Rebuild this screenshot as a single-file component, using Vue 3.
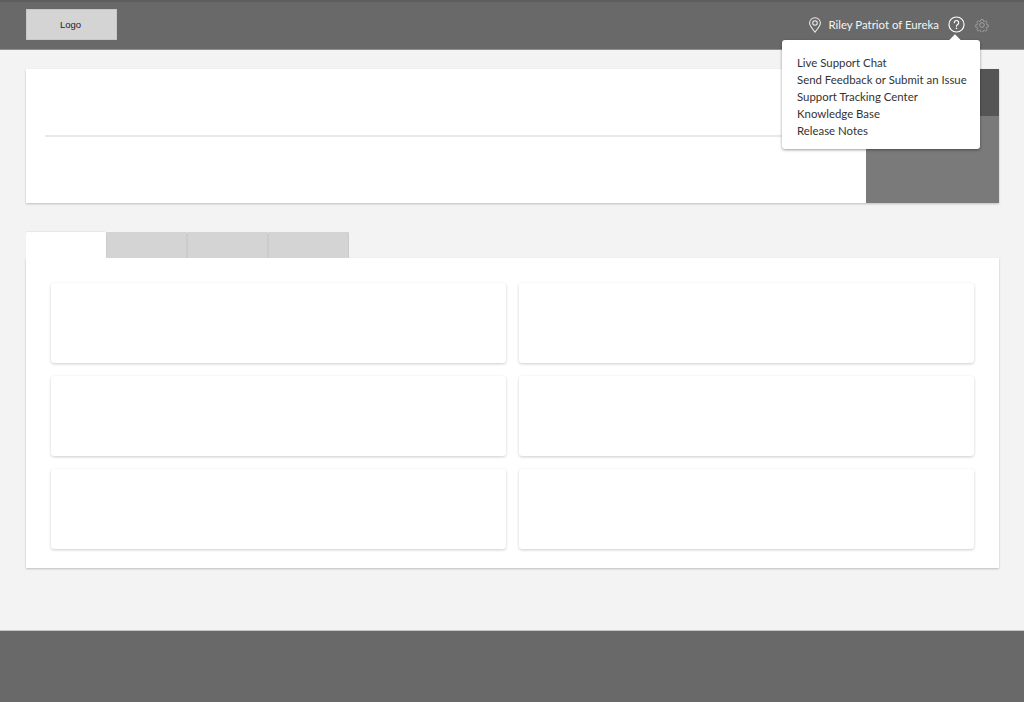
<script setup>
const links = ['Live Support Chat', 'Send Feedback or Submit an Issue', 'Support Tracking Center', 'Knowledge Base', 'Release Notes']
const tabs = [0, 1, 2, 3]
const cards = [0, 1, 2, 3, 4, 5]
</script>

<template>
  <div class="page">
    <header class="topbar">
      <div class="logo">Logo</div>
      <div class="user">
        <svg class="pin" width="14" height="16" viewBox="0 0 16 19" fill="none" stroke="#f2f2f2" stroke-width="1.2">
          <path d="M8 18C5 14 1.600 10.800 1.600 7.200a6.400 6.400 0 0 1 12.800 0C14.400 10.800 11 14 8 18Z" />
          <circle cx="8" cy="7.200" r="2.700" />
        </svg>
        <span class="name">Riley Patriot of Eureka</span>
        <svg class="help" width="17" height="17" viewBox="0 0 18 18" fill="none" stroke="#fff" stroke-width="1.200">
          <circle cx="9" cy="9" r="8" />
          <path d="M6.700 7.100a2.300 2.300 0 1 1 3.500 2c-.8.500-1.200.9-1.200 1.800" stroke-linecap="round" />
          <circle cx="9" cy="13.100" r=".8" fill="#fff" stroke="none" />
        </svg>
        <svg class="gear" width="14" height="14" viewBox="0 0 24 24" fill="none" stroke="#a9a9a9" stroke-width="1.500">
          <path d="M10 1.500h4l.6 3.200 1.900.8 2.700-1.800 2.800 2.800-1.800 2.700.8 1.900 3 .6v4l-3 .6-.8 1.900 1.800 2.700-2.800 2.800-2.700-1.800-1.900.8-.6 3.200h-4l-.6-3.200-1.900-.8-2.700 1.800-2.800-2.800 1.800-2.700-.8-1.900-3-.6v-4l3-.6.8-1.900-1.800-2.700 2.800-2.800 2.700 1.800 1.900-.8Z" transform="translate(12 12) scale(.9) translate(-12 -12)" />
          <circle cx="12" cy="12" r="4" />
        </svg>
      </div>
      <div class="popover">
        <span class="caret"></span>
        <a v-for="link in links" :key="link" class="pop-link">{{ link }}</a>
      </div>
    </header>

    <main class="main">
      <section class="hero">
        <div class="hero-body">
          <div class="hero-line"></div>
        </div>
        <aside class="hero-side">
          <div class="side-top"></div>
          <div class="side-bottom"></div>
        </aside>
      </section>

      <section class="tabbed">
        <div class="tabs">
          <div v-for="t in tabs" :key="t" class="tab" :class="{ active: t === 0 }"></div>
        </div>
        <div class="panel">
          <div v-for="c in cards" :key="c" class="card"></div>
        </div>
      </section>
    </main>

    <footer class="footer"></footer>
  </div>
</template>

<style scoped>
.page {
  width: 1024px;
  height: 702px;
  display: flex;
  flex-direction: column;
  background: #f3f3f3;
  overflow: hidden;
  font-family: Lato, "Noto Sans", sans-serif;
}
.topbar {
  position: relative;
  flex: 0 0 50px;
  box-sizing: border-box;
  height: 50px;
  display: flex;
  align-items: center;
  justify-content: space-between;
  padding: 0 35px 0 26px;
  background: #696969;
  border-top: 2px solid #5d5d5d;
  border-bottom: 1px solid #8f8f8f;
}
.logo {
  width: 91px;
  height: 31px;
  margin-top: -3px;
  display: flex;
  align-items: center;
  justify-content: center;
  padding-right: 2px;
  box-sizing: border-box;
  background: #d4d4d4;
  box-shadow: inset 0 0 0 1px #c8c8c8;
  color: #222;
  font-family: "Liberation Sans", sans-serif;
  font-size: 9.5px;
}
.user {
  display: flex;
  align-items: center;
  margin-top: -2px;
}
.pin { margin-right: 6px; }
.name {
  color: #f4f4f4;
  font-size: 11.400px;
  white-space: nowrap;
  margin-right: 9px;
}
.help { margin-right: 10px; }
.popover {
  position: absolute;
  z-index: 2;
  left: 782px;
  top: 38px;
  width: 198px;
  height: 109px;
  box-sizing: border-box;
  padding: 14px 0 0 15px;
  display: flex;
  flex-direction: column;
  background: #fff;
  border-radius: 3px;
  box-shadow: 0 1px 3px rgba(0, 0, 0, .4);
}
.caret {
  position: absolute;
  left: 169px;
  top: -4px;
  width: 8px;
  height: 8px;
  background: #fff;
  transform: rotate(45deg);
}
.pop-link {
  position: relative;
  color: #333;
  font-size: 11.400px;
  line-height: 17px;
  white-space: nowrap;
}
.main {
  flex: 1;
  display: flex;
  flex-direction: column;
  padding: 19px 25px 0 26px;
}
.hero {
  height: 134px;
  display: flex;
  background: #fff;
  box-shadow: 0 1px 2px rgba(0, 0, 0, .22);
}
.hero-body {
  flex: 1;
  padding: 66px 0 0 19px;
}
.hero-line {
  height: 2px;
  background: #e8e8e8;
}
.hero-side {
  flex: 0 0 133px;
  display: flex;
  flex-direction: column;
}
.side-top {
  flex: 0 0 47px;
  background: #555;
}
.side-bottom {
  flex: 1;
  background: #7a7a7a;
}
.tabbed {
  margin-top: 29px;
}
.tabs {
  display: flex;
  height: 26px;
}
.tab {
  width: 81px;
  background: #d4d4d4;
  border-radius: 2px 2px 0 0;
  box-shadow: inset -1px 0 0 #cacaca, inset 1px 0 0 #cdcdcd;
}
.tab.active {
  width: 80px;
  background: #fff;
  box-shadow: 0 -1px 1px rgba(0, 0, 0, .05);
}
.panel {
  height: 310px;
  box-sizing: border-box;
  padding: 25px;
  display: grid;
  grid-template-columns: 455px 455px;
  grid-auto-rows: 80px;
  column-gap: 13px;
  row-gap: 13px;
  background: #fff;
  box-shadow: 0 1px 2px rgba(0, 0, 0, .22);
}
.card {
  background: #fff;
  border-radius: 3px;
  box-shadow: 0 1px 3px rgba(0, 0, 0, .2);
}
.footer {
  flex: 0 0 72px;
  box-sizing: border-box;
  background: #696969;
  border-top: 1px solid #c4c4c4;
}
</style>
